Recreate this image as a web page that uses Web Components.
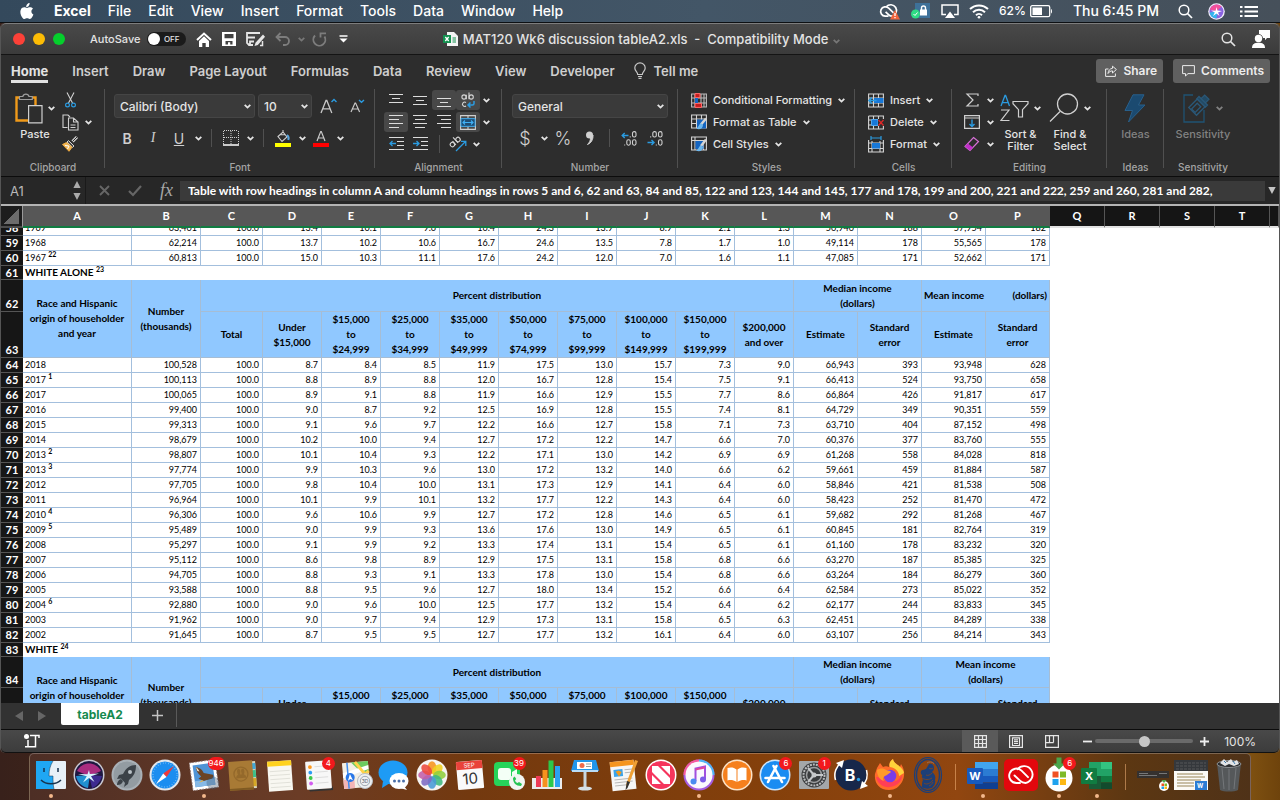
<!DOCTYPE html>
<html lang="en">
<head>
<meta charset="utf-8">
<meta name="viewport" content="width=device-width, initial-scale=1">
<title>MAT120 Wk6 discussion tableA2.xls</title>
<style>
  :root {
    --ui: Inter, "Liberation Sans", sans-serif;
    --sheet: Lato, "Open Sans", sans-serif;
    --panel: #2d2d2d;
    --fg: #e4e4e4;
    --fg-soft: #a5a5a5;
  }
  html, body { margin: 0; height: 100%; }
  body {
    font-family: var(--ui);
    color: var(--fg);
    background: linear-gradient(90deg, #38211b, #5c3014 30%, #7a3c0c 70%, #8a5a14 96%, #6e430c);
    overflow: hidden;
  }
</style>
</head>
<body>
<desktop-shell></desktop-shell>

<script>
// [width, height, markup]
const ICONS = {
  chevron: [7, 5, `<path d="M.7.800l2.800 2.800L6.300.800" fill="none" stroke="currentColor" stroke-width="1.800"/>`],
  apple: [14, 17, `<path d="M9.6 0c.1 1.200-.4 2.200-1 2.900-.6.700-1.500 1.200-2.400 1.100-.1-1.100.4-2.100 1-2.800C7.800.5 8.800 0 9.600 0zM13 5.800c-1 .6-1.600 1.500-1.600 2.700 0 1.400.8 2.400 2 2.900-.3.900-.7 1.700-1.200 2.500-.7 1-1.400 2-2.500 2s-1.400-.6-2.600-.6c-1.200 0-1.600.6-2.600.7-1.100 0-1.900-1.100-2.600-2.100C.5 11.900-.3 8.400 1 6.200c.7-1.200 1.900-1.900 3.100-1.900 1.200 0 2 .7 3 .7s1.600-.8 3-.7c.9 0 2.100.4 2.900 1.500z" fill="#fff"/>`],
  cloud: [22, 17, `<g fill="none" stroke="#fff" stroke-width="1.700"><path d="M9.500 13.200H6.200a4.700 4.700 0 1 1 3.500-8l4.800 4.600"/><path d="M7.300 3.800A5.800 5.800 0 1 1 13 13.200c-1.400 0-2.400-.5-3.200-1.300L6.600 8.800"/></g><path d="M16 7l5 9.500H11z" fill="#f0643c"/><path d="M16 10v3M16 14v1.300" stroke="#fff" stroke-width="1.300"/>`],
  lock: [20, 16, `<rect x="4" width="15" height="15" fill="#3e7199"/><rect x="9" y="6.500" width="7" height="6" fill="#fff"/><path d="M10.500 7V5a2 2 0 0 1 4 0v2" fill="none" stroke="#fff" stroke-width="1.400"/><circle cx="4.500" cy="11" r="4.500" fill="#2fdc85"/><path d="M2.500 11l1.500 1.500 2.500-3" fill="none" stroke="#fff"/>`],
  airplay: [18, 15, `<path d="M5 10.500H1V1h16v9.500h-4" fill="none" stroke="#fff" stroke-width="1.500"/><path d="M9 7.500l5 6.500H4z" fill="#fff"/>`],
  wifi: [20, 15, `<g fill="none" stroke="#fff" stroke-width="2"><path d="M1 5a13 13 0 0 1 18 0"/><path d="M4 8.200a8.500 8.500 0 0 1 12 0"/><path d="M7 11.200a4.300 4.300 0 0 1 6 0"/></g><circle cx="10" cy="13.300" r="1.300" fill="#fff"/>`],
  battery: [24, 13, `<rect x=".7" y=".7" width="19" height="11" rx="1.500" fill="none" stroke="#fff" stroke-width="1.300"/><rect x="2.500" y="2.500" width="9.500" height="7.500" fill="#fff"/><path d="M21 4v4.500c1.300-.5 1.300-4 0-4.500z" fill="#fff"/>`],
  search: [15, 15, `<circle cx="6" cy="6" r="4.800" fill="none" stroke="currentColor" stroke-width="1.500"/><path d="M9.500 9.500L14 14" stroke="currentColor" stroke-width="1.700"/>`],
  siriMini: [17, 17, `<circle cx="8.500" cy="8.500" r="8.300" fill="#f2eefa"/><circle cx="8.500" cy="8.500" r="7" fill="#8a63e0"/><path d="M1.800 6.500a7 7 0 0 1 11.700-3l-5 5z" fill="#f24f9c"/><path d="M1.600 9.500a7 7 0 0 0 6.900 6l1-7z" fill="#34b5ee"/><path d="M8.500 4l.9 3.500 4.600.5-4 1.500 1.500 3.500-3-2.500-3.500 2.500 1.800-3.500L3 7.500l4.600.2z" fill="#fff"/>`],
  list: [18, 13, `<path d="M0 2h2.500M0 6.500h2.500M0 11h2.500" stroke="#fff" stroke-width="2"/><path d="M4.500 2H18M4.500 6.500H18M4.500 11H18" stroke="#fff" stroke-width="2"/>`],
  home: [16, 15, `<path d="M1 8l7-6.500L15 8" fill="none" stroke="#fff" stroke-width="2"/><path d="M3 9l5-4.700L13 9v6H9.700v-4H6.300v4H3z" fill="#fff"/>`],
  save: [14, 14, `<path d="M0 0h14v14H0z" fill="#fff"/><path d="M2.500 2h9v4.300h-9zM3.500 9h7v3.500H8.200v-2.300H6v2.300H3.500z" fill="#414141"/>`],
  saveEdit: [19, 15, `<path d="M14 1H1v10l2 2h4M1 5.500h8M4 13v-3.500h4" fill="none" stroke="#e6e6e6" stroke-width="1.800"/><path d="M17 2.500l-7.500 8.300-1 3.200 3.300-1L19 4.800z" fill="#e6e6e6"/><path d="M14 13.500h2.500V9" fill="none" stroke="#e6e6e6" stroke-width="1.500"/>`],
  undo: [16, 14, `<path d="M5.500 1L1.500 5l4 4M1.500 5H10a4 4 0 0 1 0 8H8" fill="none" stroke="#7d7d7d" stroke-width="1.800"/>`],
  redo: [15, 15, `<path d="M3 3.500A6 6 0 1 0 12.500 4.500" fill="none" stroke="#7d7d7d" stroke-width="1.900"/><path d="M8.500 5.500V1.300h5.500" fill="none" stroke="#7d7d7d" stroke-width="1.800"/>`],
  customize: [9, 8, `<path d="M.5 1h8" stroke="#fff" stroke-width="1.500"/><path d="M.5 3.500h8L4.500 7.500z" fill="#fff"/>`],
  xls: [15, 14, `<path d="M4 0h7l4 4v10H4z" fill="#f4f4f4"/><rect y="3" width="8" height="8" fill="#149150"/><path d="M2.300 5l3.400 4M5.700 5L2.300 9" stroke="#fff" stroke-width="1.300"/><path d="M9.500 6H13M9.500 8H13M9.500 10H13" stroke="#149150" stroke-width="1.200"/>`],
  user: [18, 18, `<circle cx="6.500" cy="8.500" r="3.700" fill="#fff"/><path d="M0 18c0-4 2.500-5.300 6.500-5.300S13 14 13 18z" fill="#fff"/><path d="M7 0h11v8h-3l-2 2.300V8h-2A5 5 0 0 0 7 4z" fill="#fff"/>`],
  bulb: [12, 17, `<path d="M3.700 12.500c0-2.500-2.900-3.200-2.900-6.500a5.200 5.200 0 0 1 10.400 0c0 3.300-2.900 4-2.900 6.500zM4 14.500h4M4.500 16.300h3" fill="none" stroke="#c8c8c8" stroke-width="1.200"/>`],
  share: [12, 12, `<path d="M3.500 4H.6v7.400h9.800V8.500" fill="none" stroke="#ececec"/><path d="M7.500 1.200L11.400 4.500 7.500 8V5.900C5.500 5.900 4.200 6.700 3 8.500c.3-3 1.800-4.800 4.500-5.200z" fill="none" stroke="#ececec"/>`],
  comment: [13, 12, `<path d="M.6.600h11.800v8H6L3.500 11V8.600H.6z" fill="none" stroke="#ececec"/>`],
  paste: [28, 31, `<path d="M6 4.500H1.500v23H14M15 4.500h5.500V12" fill="none" stroke="#f09a1a" stroke-width="2.400"/><path d="M4.500 6.500v-3h3.300a3.200 3.200 0 0 1 6.200 0h3.300v3z" fill="#2d2d2d" stroke="#9d9d9d" stroke-width="1.200"/><path d="M13.600 12.600H27v17.300H13.600z" fill="#2d2d2d" stroke="#cfcfcf" stroke-width="1.200"/>`],
  cut: [11, 16, `<path d="M2 .5l5.500 10.500M9 .5L3.500 11" stroke="#cfcfcf" stroke-width="1.100"/><circle cx="2.500" cy="13" r="1.900" fill="none" stroke="#2b9be0" stroke-width="1.200"/><circle cx="8.500" cy="13" r="1.900" fill="none" stroke="#2b9be0" stroke-width="1.200"/>`],
  copy: [17, 17, `<path d="M5.500 13.500H1V1h5l2 2" fill="none" stroke="#cfcfcf" stroke-width="1.100"/><path d="M6.500 4h5L16 8v8H6.500zM11.500 4v4H16M8.500 11h5M8.500 13.500h5" fill="none" stroke="#cfcfcf" stroke-width="1.100"/>`],
  brush: [16, 16, `<path d="M15 1l-4.500 4.500" stroke="#cfcfcf" stroke-width="3"/><path d="M15 1l-4.500 4.500" stroke="#2d2d2d"/><path d="M6.500 4.500l5.500 5.500-1.500 1.500L5 6z" fill="#4a4a4a" stroke="#cfcfcf"/><path d="M4.500 6.500L.5 8.500 7 15.300l3-4z" fill="#f0b95c" stroke="#f0a93c"/><path d="M3 9.500l4 .5M5.500 13l1.500-3" stroke="#fff"/>`],
  grow: [17, 16, `<path d="M1 15L6 2.500h.8L11.800 15M2.700 10.800h7.400" fill="none" stroke="#c8c8c8" stroke-width="1.300"/><path d="M11.500 4L14 1.500 16.500 4" fill="none" stroke="#2b9be0" stroke-width="1.400"/>`],
  shrink: [15, 14, `<path d="M1 13L5 4h.6l4 9M2.500 10h5.600" fill="none" stroke="#c8c8c8" stroke-width="1.200"/><path d="M9 1l2.500 2.300L14 1" fill="none" stroke="#2b9be0" stroke-width="1.400"/>`],
  borders: [16, 16, `<path d="M1 .5h14M.5 1v13M15.500 1v13M8 1v13M1 7.500h14" stroke="#cfcfcf" stroke-dasharray="1 1" fill="none"/><path d="M0 15h16" stroke="#fff" stroke-width="1.500"/>`],
  fill: [16, 17, `<path d="M3 6.500L8 2l4 5-5 4.500zM8 2V0M5 4.800l5 0" fill="none" stroke="#cfcfcf" stroke-width="1.100"/><path d="M12 5c2 1.500 2 3 1.300 5" fill="none" stroke="#5aa5dc" stroke-width="2"/><path d="M0 13h16v4H0z" fill="#ff0"/>`],
  fontColor: [16, 17, `<path d="M4 11L7.700 1.500h.6L12 11M5.200 8h5.600" fill="none" stroke="#c8c8c8" stroke-width="1.200"/><path d="M0 13h16v4H0z" fill="red"/>`],
  alignTop: [14, 14, `<path d="M0 1.500h14M3 5.500h8M0 9.500h14" stroke="#dcdcdc" stroke-width="1.200"/>`],
  alignMid: [14, 14, `<path d="M0 3.500h14M3 7.500h8M0 11.500h14" stroke="#dcdcdc" stroke-width="1.200"/>`],
  alignBot: [14, 14, `<path d="M0 5.500h14M3 9.500h8M0 13.500h14" stroke="#dcdcdc" stroke-width="1.200"/>`],
  left: [14, 14, `<path d="M0 .5h14M0 4.500h10M0 8.500h14M0 12.500h10" stroke="#dcdcdc" stroke-width="1.200"/>`],
  center: [14, 14, `<path d="M0 .5h14M2 4.500h10M0 8.500h14M2 12.500h10" stroke="#dcdcdc" stroke-width="1.200"/>`],
  right: [14, 14, `<path d="M0 .5h14M4 4.500h10M0 8.500h14M4 12.500h10" stroke="#dcdcdc" stroke-width="1.200"/>`],
  outdent: [15, 14, `<path d="M0 .5h15M8 4.500h7M8 8.500h7M0 12.500h15" stroke="#dcdcdc" stroke-width="1.200"/><path d="M7 6.500H1.200M3.500 4L1 6.500 3.500 9" fill="none" stroke="#2b9be0" stroke-width="1.300"/>`],
  indent: [15, 14, `<path d="M0 .5h15M8 4.500h7M8 8.500h7M0 12.500h15" stroke="#dcdcdc" stroke-width="1.200"/><path d="M0 6.500h5.800M3.500 4L6 6.500 3.500 9" fill="none" stroke="#2b9be0" stroke-width="1.300"/>`],
  wrap: [14, 16, `<g fill="none" stroke="#d5d5d5" stroke-width="1.100"><circle cx="3" cy="5" r="2.100"/><path d="M5.300 2.700v4.500M8 .5v6.700"/><circle cx="10.200" cy="5" r="2.100"/><path d="M5 10.500a2.200 2.200 0 1 0 0 3.500"/></g><path d="M13 9v2.500c0 1-.6 1.500-1.500 1.500H7M9.500 10.500L7 13l2.500 2.500" fill="none" stroke="#2b9be0" stroke-width="1.500"/>`],
  merge: [16, 15, `<path d="M.6.600h14.800v13.800H.6zM.6 3.500h14.800M.6 11.500h14.800M8 .6v2.900M8 11.500v2.900" fill="none" stroke="#cfcfcf" stroke-width="1.100"/><path d="M1 3.700h14v7.600H1z" fill="#1f4d73" stroke="#2b9be0"/><path d="M3 7.500h10M5 5.500l-2 2 2 2M11 5.500l2 2-2 2" fill="none" stroke="#3fb0f5" stroke-width="1.200"/>`],
  orient: [17, 16, `<g transform="rotate(-42 6 8)" fill="none" stroke="#d5d5d5" stroke-width="1.100"><circle cx="3" cy="6" r="2.200"/><path d="M5.400 3.500v5M8.300 1v7.500"/><circle cx="10.500" cy="6" r="2.200"/></g><path d="M6 15L15.500 5.500M11 5.300h4.800V10" fill="none" stroke="#2b9be0" stroke-width="1.300"/>`],
  decUp: [16, 15, `<path d="M7.500 4.500H1.200M3.700 2L1.200 4.500 3.700 7" fill="none" stroke="#2b9be0" stroke-width="1.400"/><g fill="none" stroke="#cfcfcf" stroke-width="1.100"><rect x="11.500" y=".6" width="3.500" height="5.400" rx="1.600"/><rect x="5.800" y="8.800" width="3.500" height="5.400" rx="1.600"/><rect x="11.500" y="8.800" width="3.500" height="5.400" rx="1.600"/></g><path d="M8.700 5.800h1M3.200 14h1" stroke="#cfcfcf" stroke-width="1.200"/>`],
  decDown: [16, 15, `<path d="M.5 11.500H7M4.500 9L7 11.500 4.500 14" fill="none" stroke="#2b9be0" stroke-width="1.400"/><g fill="none" stroke="#cfcfcf" stroke-width="1.100"><rect x="5.800" y=".6" width="3.500" height="5.400" rx="1.600"/><rect x="11.500" y=".6" width="3.500" height="5.400" rx="1.600"/><rect x="11.500" y="8.800" width="3.500" height="5.400" rx="1.600"/></g><path d="M3.200 5.800h1M8.800 14h1" stroke="#cfcfcf" stroke-width="1.200"/>`],
  comma: [9, 15, `<circle cx="4.500" cy="4" r="3.500" fill="#d0d0d0"/><path d="M8 4c.2 4.500-1.500 7.800-5.500 9.500 2-2 3-4 3-6.500z" fill="#d0d0d0" stroke="#d0d0d0"/>`],
  condFormat: [16, 15, `<path d="M.6 1h14.800v13H.6zM.6 5h14.800M.6 10h14.800M4 1v13M10 1v13M13 1v13" fill="none" stroke="#bdbdbd" stroke-width="1.100"/><path d="M4 .6h5v4H4zM4 10.400h6.500v4H4z" fill="#c41d1d" stroke="#ff6a6a"/><path d="M4 5h3v5H4z" fill="#1464c0"/>`],
  tableFormat: [16, 16, `<path d="M.6 1h14.800v13H.6zM.6 5h14.800M.6 9.500h14.800M5.500 1v13M10.500 1v13" fill="none" stroke="#d5d5d5" stroke-width="1.100"/><path d="M6 5.500h9v9H6z" fill="#1464c0"/><path d="M15 4.500l-5 6" stroke="#d5d5d5" stroke-width="2.500"/><path d="M10.500 9.500c-3 0-2.500 4-5.500 5 3 1.500 7 .5 7-3.500z" fill="#6db8ee"/>`],
  cellStyle: [16, 16, `<path d="M.6 1h14.800v13H.6zM.6 4.500h14.800M4 1v13M12.500 4v10" fill="none" stroke="#d5d5d5" stroke-width="1.100"/><path d="M4.500 5h8v8h-8z" fill="#1464c0"/><path d="M15 3.500l-5 6.500" stroke="#d5d5d5" stroke-width="2.500"/><path d="M10.500 9.500c-3 0-2.500 4-5.500 5 3 1.500 7 .5 7-3.500z" fill="#6db8ee"/>`],
  insertCells: [16, 15, `<path d="M.6 1h14.800v13H.6zM.6 5h14.800M.6 10h14.800M5.500 1v13M10.500 1v13" fill="none" stroke="#d5d5d5" stroke-width="1.100"/><path d="M6 5h9.500v5H6z" fill="#1878d8"/><path d="M8.500 7.500H1M4 4.500l-3 3 3 3" fill="none" stroke="#2b9be0" stroke-width="1.500"/>`],
  deleteCells: [16, 15, `<path d="M.6 1h14.800v13H.6V1M.6 5H4M.6 10H4M5.500 1v3M10.500 1v3M5.500 11v3M10.500 11v3" fill="none" stroke="#d5d5d5" stroke-width="1.100"/><path d="M3.500 4.500h6.500v6H3.500z" fill="#1878d8" stroke="#4fa7ee"/><path d="M10 4h6v7h-6z" fill="#2d2d2d"/><path d="M10.500 5l5 5.500M15.500 5l-5 5.500" stroke="#e02828" stroke-width="1.300"/>`],
  formatCells: [16, 17, `<path d="M.6 4v12h14.800V4M.6 7h14.800M.6 12.500h14.800M4 5v11M12 5v11" fill="none" stroke="#d5d5d5" stroke-width="1.100"/><path d="M4 7h8v5.500H4z" fill="#1878d8"/><path d="M3 2h10M3 0v4M13 0v4" stroke="#2b9be0" stroke-width="1.200"/>`],
  sum: [13, 14, `<path d="M12 3V1H1l6 6-6 6h11v-2" fill="none" stroke="#d0d0d0" stroke-width="1.200"/>`],
  fillDown: [16, 14, `<path d="M.6.600h14.800v12.800H.6zM.6 3h14.800" fill="none" stroke="#d0d0d0" stroke-width="1.200"/><path d="M8 4.500v7M5.500 9L8 11.500 10.500 9" fill="none" stroke="#2b9be0" stroke-width="1.400"/>`],
  eraser: [16, 16, `<path d="M9.500 1.500l5 4-8.500 9-5-4z" fill="none" stroke="#d46fd4" stroke-width="1.200"/><path d="M4 7.500l5 4-3 3-5-4z" fill="#c02ec8"/>`],
  sort: [29, 29, `<path d="M1 12L5 1.500h.6L9.500 12M2.300 8.700h6" fill="none" stroke="#2b9be0" stroke-width="1.300"/><path d="M1 16h8L1 26.500h8.500" fill="none" stroke="#d0d0d0" stroke-width="1.200"/><path d="M13 7.500h15v2.200l-5.500 6V23h-4v-7.300l-5.500-6z" fill="none" stroke="#d0d0d0" stroke-width="1.200"/>`],
  find: [30, 30, `<circle cx="18.500" cy="11" r="10" fill="none" stroke="#d0d0d0" stroke-width="1.300"/><path d="M11 18.500L1 28.500" stroke="#d0d0d0" stroke-width="1.300"/>`],
  bolt: [22, 29, `<path d="M9 .8h11L14.500 11H21L4.500 28l4-11.500H1z" fill="#1b4a70" stroke="#28608c"/>`],
  sensitivity: [28, 31, `<path d="M10 2H1v27h20V17" fill="none" stroke="#1f5373" stroke-width="1.300"/><g transform="rotate(45 16 12)" fill="none" stroke="#2a5878" stroke-width="1.300"><rect x="10.500" y="9" width="11" height="12"/><rect x="13.500" y="12" width="5" height="8"/><path d="M10 6h12v3H10zM13 6V1h6v5z" fill="#234a64"/></g>`],
  clear: [11, 11, `<path d="M1 1l9 9M10 1l-9 9" stroke="#666" stroke-width="1.900"/>`],
  check: [14, 11, `<path d="M1 6l4 4L13 1" fill="none" stroke="#666" stroke-width="2.200"/>`],
  stepper: [8, 19, `<path d="M4 0l3.600 7H.4zM4 19l3.600-7H.4z" fill="#ababab"/>`],
  down: [8, 7, `<path d="M.3 0h7.400L4 7z" fill="#c4c4c4"/>`],
  prev: [8, 10, `<path d="M8 0v10L0 5z" fill="#666"/>`],
  next: [8, 10, `<path d="M0 0v10l8-5z" fill="#666"/>`],
  plus: [11, 11, `<path d="M5.500 0v11M0 5.500h11" stroke="#c4c4c4" stroke-width="1.500"/>`],
  plusBold: [9, 9, `<path d="M4.500 0v9M0 4.500h9" stroke="#eee" stroke-width="1.800"/>`],
  minusBold: [9, 9, `<path d="M0 4.500h9" stroke="#eee" stroke-width="1.800"/>`],
  macro: [16, 14, `<circle cx="2.500" cy="2.500" r="2.500" fill="#fff"/><path d="M6 1.500h9.500M4 6v6.500M1 12.700h10.500V2M12 1.500h3V4" fill="none" stroke="#fff" stroke-width="1.500"/>`],
  viewNormal: [13, 13, `<path d="M.6.600h11.800v11.800H.6zM.6 4.500h11.800M.6 8.500h11.800M4.500.6v11.800M8.500.6v11.800" fill="none" stroke="#e6e6e6" stroke-width="1.200"/>`],
  viewPage: [14, 13, `<path d="M.6.600h12.800v11.800H.6zM3.500 2.800h7v7.700h-7zM5 4.800h4M5 6.600h4M5 8.500h4" fill="none" stroke="#e6e6e6" stroke-width="1.200"/>`],
  viewBreak: [14, 13, `<path d="M.6.600h12.800v11.800H.6zM4.500.6v7M8.500.6v7M.6 7.700h8" fill="none" stroke="#e6e6e6" stroke-width="1.200"/>`]
};

// all dock art is drawn on a 32x32 board
const DOCK_ART = {
  finder: `<rect x="1" y="2" width="30" height="28" rx="1" fill="#e8f1f8"/><path d="M1 2h17c-3 5-4 9-4 15h4c0 5 0 9 1 13H1z" fill="#1fa7f3"/><path d="M9 9v4M23 9v4M6 21c5 5 15 5 20 0" fill="none" stroke="#17324c" stroke-width="1.500"/><path d="M18 2c-3 5-4 9-4 15h4c0 5 0 9 1 13" fill="none" stroke="#17324c" stroke-width=".5"/>`,
  siri: `<circle cx="16" cy="16" r="15.500" fill="#c9c9d2"/><circle cx="16" cy="16" r="14" fill="#1e1740"/><path d="M4 12c5-10 19-10 24 0L16 17z" fill="#a92c80"/><path d="M3 17c1 6 6 11 12 12l2-13z" fill="#1f8fd0"/><path d="M29 17c-2 6-5 10-10 12l-3-13z" fill="#3d2a90"/><path d="M16 11l.8 4 9.200-.5-8 2.800 3.500 5.700-5.500-4-6 4.500 3.800-6.200L5 15l9.500.3z" fill="#d9f6ff"/>`,
  rocket: `<circle cx="16" cy="16" r="15.500" fill="#a9b1b7"/><circle cx="16" cy="16" r="13.500" fill="#939ca2"/><path d="M25 6c-6 0-10 3-13 9l-4 1-2 4 4-.5L14 24l-1 4 4-3 1-4c5-4 7-8 7-15z" fill="#3b4248"/><circle cx="19" cy="13" r="2" fill="#b9c1c6"/><path d="M10 20c-3 1-4 4-4 6 3 0 5-1 6-4z" fill="#3b4248"/>`,
  safari: `<circle cx="16" cy="16" r="15.500" fill="#e4e8ec"/><circle cx="16" cy="16" r="13.500" fill="#1c8ef0"/><circle cx="16" cy="16" r="12" fill="none" stroke="#8cc9f8" stroke-dasharray=".6 2.100" stroke-width="1.500"/><path d="M25 7l-7.500 11-3.300-3.500z" fill="#f0393a"/><path d="M7 25l7.200-10.500 3.300 3.500z" fill="#fff"/>`,
  mail: `<g transform="rotate(-8 16 16)"><rect x="3" y="2" width="26" height="28" fill="#fff"/><rect x="3" y="2" width="26" height="28" fill="none" stroke="#8a6f68" stroke-dasharray="1.500 1.500"/><rect x="6" y="5" width="20" height="22" fill="#4f94d6"/><path d="M6 21h20v6H6z" fill="#86b9e6"/><path d="M9 7c3 1 6 3 7 7l9 3c1 2-1 4-4 4l-6 1-5-3 3-2c-3-3-4-6-4-10z" fill="#6b4425"/><path d="M9 7c1 1 2 2 3 5l-2-1z" fill="#f2e6d0"/><path d="M13 21l-3 2 5-1z" fill="#e8b23c"/></g><circle cx="25" cy="24" r="6.500" fill="#3a4f66" fill-opacity=".35"/>`,
  contacts: `<g transform="rotate(-4 16 16)"><rect x="6" y="3" width="24" height="27" fill="#d9d3ba"/><path d="M26 5h4v6h-4z" fill="#40a8d8"/><path d="M26 12h4v7h-4z" fill="#3dc08a"/><path d="M26 20h4v8h-4z" fill="#d6a726"/><path d="M3 2h24v29H3z" fill="#a87a35"/><path d="M3 29h24v2H3z" fill="#7f5a22"/><circle cx="15" cy="15" r="7" fill="none" stroke="#94692b" stroke-width="1.300"/><path d="M12 10c2-1 3 1 2.500 3-.3 1.500-.5 2 .5 3v3h-5c0-2 1-3 2-3.500-.8-2-1-4.500 0-5.500zM18 10c-2-1-3 1-2.500 3 .3 1.500.5 2-.5 3v3h5c0-2-1-3-2-3.500.8-2 1-4.500 0-5.500z" fill="#94692b"/></g>`,
  notes: `<g transform="rotate(-4 16 16)"><rect x="4" y="2" width="24" height="30" fill="#f8f7f1"/><path d="M4 2h24v5H4z" fill="#ffd21e"/><path d="M6 12h20M6 16h20M6 20h20M6 24h20M6 28h20" stroke="#d8d8d0" stroke-width=".7"/></g>`,
  reminders: `<g transform="rotate(-4 16 16)"><path d="M6 30h23l1-3v5H7z" fill="#333"/><rect x="4" y="2" width="25" height="28" rx="1" fill="#f7f7f7"/><circle cx="8.500" cy="7.500" r="1.900" fill="#ff9a1e"/><circle cx="8.500" cy="13" r="1.900" fill="#2c9cf4"/><circle cx="8.500" cy="18.500" r="1.900" fill="#3cc84a"/><circle cx="8.500" cy="24" r="1.900" fill="#d35cf0"/><path d="M13 7.500h13M13 13h13M13 18.500h13M13 24h13" stroke="#ddd"/></g>`,
  maps: `<g transform="rotate(-5 16 16)"><rect x="3" y="3" width="26" height="26" fill="#f3efe4"/><path d="M12 3h17v12L20 12z" fill="#6ccb5f"/><path d="M3 13l26-6v4L3 18z" fill="#fff"/><path d="M16 3l9 13 4-3" stroke="#ffd24a" stroke-width="3" fill="none"/><path d="M3 20h11v9H3z" fill="#f4b5b5"/><path d="M8 3v26" stroke="#3f8cf0" stroke-width="1.500"/><circle cx="10" cy="18" r="4.500" fill="#2a78e8"/><path d="M10 14.500l2.500 6.500-2.500-1.500L7.500 21z" fill="#fff"/></g><circle cx="25" cy="22" r="7.500" fill="#eef0f2" stroke="#b7bcc2"/><circle cx="25" cy="22" r="4.700" fill="none" stroke="#7c8894" stroke-width=".7"/><text x="25" y="24" font-size="5" text-anchor="middle" fill="#55606e">3D</text>`,
  messages: `<ellipse cx="15" cy="13.500" rx="14.500" ry="12" fill="#1e9bf5"/><path d="M5 22l-1 7 8-5z" fill="#1e9bf5"/><ellipse cx="21" cy="22" rx="9.500" ry="8" fill="#fff"/><path d="M26 27l3 4-7-2z" fill="#fff"/><g fill="#4b6fa8"><circle cx="16.500" cy="22" r="1.500"/><circle cx="21" cy="22" r="1.500"/><circle cx="25.500" cy="22" r="1.500"/></g>`,
  photos: `<circle cx="16" cy="16" r="15.500" fill="#f6f4f2"/><g fill-opacity=".88">${["#f7941d", "#f0d01e", "#8fcf3c", "#3fb87e", "#4a9ad6", "#7e6bc4", "#c35fa8", "#ee4a3c"].map((c, i) => `<ellipse cx="16" cy="8.500" rx="4.300" ry="6.300" fill="${c}" transform="rotate(${i * 45} 16 16)"/>`).join("")}</g>`,
  calendar: `<g transform="rotate(-5 16 16)"><rect x="3" y="2" width="26" height="28" rx="1" fill="#fafafa"/><path d="M3 2h26v8H3z" fill="#e9423a"/><text x="16" y="8.300" font-size="6" text-anchor="middle" fill="#fff">SEP</text><text x="16" y="25" font-size="15" text-anchor="middle" fill="#333">10</text></g>`,
  facetime: `<rect x="1" y="3" width="26" height="24" rx="4" fill="#26d45a"/><rect x="5" y="9" width="13" height="12" rx="3" fill="#f4fff6"/><path d="M19 13l5-3v10l-5-3z" fill="#f4fff6"/><circle cx="24" cy="23" r="8" fill="#f2f6f3"/><path d="M20 19c0 5 3 8 8 8l1-2-3-2-1.500 1c-1.500-.5-2-1.500-2.500-2.500l1.200-1.500-1.500-2.500z" fill="#28c456"/>`,
  numbers: `<path d="M1 30V19h30v11z" fill="#ececec"/><path d="M5 17h5v11H5z" fill="#ee3b56"/><path d="M11.500 11h5v17h-5z" fill="#f6921e"/><path d="M17.500 1.500h5V28h-5z" fill="#2cc84a"/><path d="M24 7h5v21h-5z" fill="#2aa2f2"/>`,
  keynote: `<path d="M5 1h22l3 11H2z" fill="#2196ec"/><path d="M3 11h26v2H3z" fill="#b9dcf6"/><rect x="8" y="3" width="15" height="7" fill="#fff"/><circle cx="13" cy="6.500" r="2.500" fill="#f26a4a"/><path d="M17 5h5M17 7.500h5" stroke="#999"/><path d="M14.500 13h3v15h-3z" fill="#c9d5dd"/><ellipse cx="16" cy="29.500" rx="7" ry="2" fill="#d5dfe6"/>`,
  pages: `<g transform="rotate(-6 16 16)"><rect x="4" y="2" width="24" height="29" fill="#f6f6f6"/><path d="M4 2h24v5H4z" fill="#f5951f"/><rect x="7" y="10" width="9" height="7" fill="#3aa3ea"/><path d="M9 12l3-1 3 2-3 4z" fill="#f39a1e"/><path d="M18 11h8M18 14h8M7 20h18M7 23h18M7 26h12" stroke="#b7b7b7"/></g><path d="M28 1l3 1-9 23-3 5 .5-6z" fill="#f0a034"/><path d="M20 22l3 1-2.500 6-2 2z" fill="#333"/>`,
  news: `<circle cx="16" cy="16" r="15.500" fill="#fff"/><circle cx="16" cy="16" r="14" fill="#f5355c"/><path d="M7 7h6l12 12v6h-6L7 13zM7 16l9 9H7zM16 7h9v9z" fill="#fff"/>`,
  music: `<circle cx="16" cy="16" r="15.500" fill="#a65de0"/><path d="M16 .5a15.500 15.500 0 0 1 15.500 15.500L16 16z" fill="#4fb4f5"/><path d="M.5 16A15.500 15.500 0 0 1 16 .5V16z" fill="#f55aa0"/><circle cx="16" cy="16" r="13.500" fill="#fbf8fd"/><path d="M12.500 22V9.500L22 7.500V20" fill="none" stroke="#a04fe0" stroke-width="2"/><path d="M12.500 11.500l9.500-2V7.500l-9.500 2z" fill="#e0459c"/><circle cx="10.500" cy="22.500" r="3" fill="#4a8cf0"/><circle cx="20" cy="20.500" r="3" fill="#7d5ae8"/>`,
  books: `<circle cx="16" cy="16" r="15.500" fill="#fbe3c8"/><circle cx="16" cy="16" r="14" fill="#f5801e"/><path d="M15.500 10.500C13 8 9 8 6.500 9v12.500c3-1 6-.5 9 1.500zM16.500 10.500C19 8 23 8 25.500 9v12.500c-3-1-6-.5-9 1.500z" fill="#fff"/>`,
  appstore: `<circle cx="16" cy="16" r="15.500" fill="#cfe6fb"/><circle cx="16" cy="16" r="14" fill="#1a8cf2"/><path d="M17.500 7L9 23M14.500 7L23 23M6.500 19h19" stroke="#fff" stroke-width="2.600" stroke-linecap="round"/>`,
  settings: `<rect x="1" y="2" width="30" height="28" rx="1" fill="#a4a7a9"/><circle cx="16" cy="16" r="12.500" fill="#3a3c3e"/><circle cx="16" cy="16" r="10.500" fill="none" stroke="#b8babc" stroke-width="2" stroke-dasharray="2 1"/><circle cx="16" cy="16" r="7.500" fill="none" stroke="#9b9d9f" stroke-width="1.500"/><path d="M16 16L10 9M16 16h9M16 16l-6 7" stroke="#c6c8ca" stroke-width="2"/><circle cx="16" cy="16" r="2.500" fill="#c6c8ca"/>`,
  brain: `<circle cx="15" cy="16" r="15.500" fill="#17274a"/><path d="M-.5 21A16 16 0 0 1 6 3" fill="none" stroke="#fff" stroke-width="1.500"/><path d="M0 4l8-3-2 8z" fill="#fff"/><path d="M30.500 11A16 16 0 0 1 26 27" fill="none" stroke="#fff" stroke-width="1.500"/><path d="M32 27l-8 3 2-8z" fill="#fff"/><text x="14" y="22" font-size="16" font-weight="700" text-anchor="middle" fill="#fff">B</text><circle cx="22.500" cy="20.500" r="1.700" fill="#28a0e8"/>`,
  firefox: `<path d="M3 9l3-5 3 4c2-1 4-1 6 0 0-3 1-6 4-8 0 4 5 5 7 8l1-3c4 6 4 12 1 18-3 5-7 8-13 8C5 31 0 24 1 15z" fill="#ff6a2a"/><path d="M19 0c-4 3-4 6-3 8 6 1 9 5 9 9l5-3c-1-7-10-8-11-14z" fill="#ffd23a"/><path d="M2 18c2 9 11 12 18 9 5-2 8-6 8-11-3 5-7 7-11 7-7 0-9-5-15-5z" fill="#ff3f55"/><circle cx="16" cy="17" r="6.300" fill="#7a3ce8"/><path d="M3 11c3-2 7-2 9 0 2 1 4 0 5 2-1 1-3 2-4 3-3 1-5 3-3 6-4-1-7-5-7-11z" fill="#ff9a2a"/>`,
  seal: `<g fill="none" stroke="#1d3f78"><ellipse cx="16" cy="16" rx="13.500" ry="17.500" stroke-width="1.200"/><ellipse cx="16" cy="16" rx="11.500" ry="15.500" stroke-width="1.400"/></g><g fill="#1d3f78"><path d="M17 5c3-1 5 1 5 4 0 2-1 3-2 4 3 2 4 5 3 8 1 3-1 6-3 8-4 1-8 1-10-1 0-3 0-5 1-7-2-3-1-5 1-7-1-2 0-4 2-4 1-2 2-3 3-5z"/><circle cx="11.500" cy="13.500" r="2.700"/></g><path d="M15 4c2-1.500 5-1.500 7 .5" fill="none" stroke="#9c7a6a" stroke-width=".8"/><path d="M17 9c1 1 3 1 4 0M14 16c2 1 4 0 6-2M10 19c3 2 7 2 10 0M12 24c2 2 6 1 9-3M17 27c2-1 3-2 4-4" fill="none" stroke="#86481a" stroke-width=".8"/>`,
  word: `<path d="M8 3h23v7H8z" fill="#41a5ee"/><path d="M8 10h23v7H8z" fill="#2b7cd3"/><path d="M8 17h23v6.500H8z" fill="#185abd"/><path d="M8 23.500h23V30H8z" fill="#103f91"/><rect x="0" y="9" width="16" height="16" rx="1" fill="#185abd"/><text x="8" y="21" font-size="11" font-weight="700" text-anchor="middle" fill="#fff">W</text>`,
  cc: `<rect x="-1" y="0" width="34" height="32" rx="5" fill="#e3070d"/><g fill="none" stroke="#fff" stroke-width="1.900" stroke-linecap="round"><path d="M15 24H11.500a7.200 7.200 0 1 1 5-12.300l6.500 6.500"/><path d="M12.500 10.200A8.500 8.500 0 1 1 20.500 24c-2.300 0-4-.8-5.300-2.100L9.500 16.500"/></g>`,
  updater: `<circle cx="16" cy="19" r="13.500" fill="#fff"/><path d="M9.500 12.500h6v6h-6z" fill="#f05023"/><path d="M17 12.500h6v6h-6z" fill="#7eba28"/><path d="M9.500 20h6v6h-6z" fill="#1fa2ee"/><path d="M17 20h6v6h-6z" fill="#fdb813"/><path d="M13.500-1.500h5v6h3.500L16 10.500 10 4.500h3.500z" fill="#4aa64c"/>`,
  excel: `<path d="M8 3h12v14H8z" fill="#21a366"/><path d="M20 3h11v7H20z" fill="#33c481"/><path d="M20 10h11v7H20z" fill="#21a366"/><path d="M8 17h12v13H8z" fill="#185c37"/><path d="M20 17h11v6.500H20z" fill="#107c41"/><path d="M20 23.500h11V30H20z" fill="#134b2d"/><rect x="0" y="9" width="16" height="16" rx="1" fill="#107c41"/><text x="8" y="21" font-size="11" font-weight="700" text-anchor="middle" fill="#fff">X</text>`,
  miniWindow: `<path d="M0 12h32v7H0z" fill="#35312f"/><path d="M2 14.500h9M22 14.500h8M2 16.500h18" stroke="#777"/><circle cx="27" cy="27" r="5" fill="#fff"/><path d="M24.500 24.500H27V27h-2.500z" fill="#f05023"/><path d="M27.500 24.500H30V27h-2.500z" fill="#7eba28"/><path d="M24.500 27.500H27V30h-2.500z" fill="#1fa2ee"/><path d="M27.500 27.500H30V30h-2.500z" fill="#fdb813"/><path d="M27 24l-2.500-3h5z" fill="#4aa64c"/>`,
  miniDoc: `<rect x="-1" y="1" width="34" height="30" fill="#fbfaf5"/><path d="M-1 1h34v11H-1z" fill="#35383c"/><path d="M1 4h30M1 7h30M1 10h30" stroke="#666" stroke-dasharray="3 1" stroke-width=".7"/><path d="M2 15h26M2 18h28M2 21h24M2 24h17M2 27h17" stroke="#b9ac8a" stroke-width="1.300"/><rect x="20" y="22" width="12" height="9" fill="#2b7cd3"/><text x="25" y="29" font-size="6" font-weight="700" text-anchor="middle" fill="#fff">W</text>`,
  trash: `<path d="M4 4h24l-3 27c-4 2-14 2-18 0z" fill="#55585a"/><path d="M9 9l2 21M23 9l-2 21M16 10v21" stroke="#74777a"/><ellipse cx="16" cy="5" rx="12" ry="3.500" fill="#2c2e30" stroke="#8d9093"/><path d="M7 4l4-4 3 3 4-3 2 3 4-2 2 4-5 2-5-2-4 2z" fill="#e2e4e6"/><path d="M11 2l2 2M20 2l2 3" stroke="#3c78a8"/>`
};

const CONTROLS = `
  button {
    display: inline-flex;
    align-items: center;
    justify-content: center;
    padding: 0;
    border: 0;
    background: none;
    color: inherit;
    font: inherit;
  }
  input, select { font: inherit; color: inherit; margin: 0; }
`;

class BaseElement extends HTMLElement {
  constructor() {
    super();
    this.attachShadow({ mode: "open" });
  }

  connectedCallback() {
    this.shadowRoot.innerHTML = this.render();
  }
}

class UiIcon extends BaseElement {
  render() {
    const [w, h, body] = ICONS[this.getAttribute("name")];
    return `
      <style>
        :host { display: inline-flex; flex: none; }
        svg { display: block; overflow: visible; }
      </style>
      <svg width="${w}" height="${h}" viewBox="0 0 ${w} ${h}" aria-hidden="true">${body}</svg>
    `;
  }
}

const icon = (name) => `<ui-icon name="${name}"></ui-icon>`;
const iconButton = (name, label, cls = "") => `<button class="${cls}" aria-label="${label}">${icon(name)}</button>`;
const chevronButton = (label) => iconButton("chevron", `${label} options`, "chev");

class MenuBar extends BaseElement {
  render() {
    const menus = ["File", "Edit", "View", "Insert", "Format", "Tools", "Data", "Window", "Help"];
    return `
      <style>
        ${CONTROLS}
        :host {
          display: flex;
          justify-content: space-between;
          align-items: center;
          height: 22px;
          padding: 0 22px 0 20px;
          border-bottom: 1px solid #0d1013;
          background: linear-gradient(90deg, #34495c, #435667 55%, #46505a);
          color: #fff;
          font-size: 14px;
          line-height: 22px;
          font-weight: 500;
        }
        nav { display: flex; align-items: center; gap: 17px; }
        nav strong { font-weight: 700; margin-left: 3px; }
        .status { display: flex; align-items: center; gap: 10px; }
        .percent { font-size: 12px; display: flex; align-items: center; gap: 4px; }
        .clock { margin: 0 9px; }
        .status button + button { margin-left: 5px; }
      </style>
      <nav>
        ${iconButton("apple", "Apple menu")}
        <button><strong>Excel</strong></button>
        ${menus.map((m) => `<button>${m}</button>`).join("")}
      </nav>
      <div class="status">
        ${icon("cloud")}${icon("lock")}${icon("airplay")}${icon("wifi")}
        <span class="percent">62% ${icon("battery")}</span>
        <span class="clock">Thu 6:45 PM</span>
        ${iconButton("search", "Spotlight")}
        ${iconButton("siriMini", "Siri")}
        ${iconButton("list", "Notification Center")}
      </div>
    `;
  }
}

class TitleBar extends BaseElement {
  render() {
    return `
      <style>
        ${CONTROLS}
        :host {
          display: grid;
          grid-template-columns: 1fr auto 1fr;
          align-items: center;
          height: 30px;
          padding: 0 9px 0 12px;
          border-top: 1px solid #7d7d7d;
          border-bottom: 1px solid #141414;
          border-radius: 5px 5px 0 0;
          background: linear-gradient(#494949, #3b3b3b);
          font-size: 12px;
          font-weight: 500;
        }
        .tools { display: flex; align-items: center; gap: 10px; }
        .lights { display: flex; gap: 8px; margin-right: 15px; }
        .light { width: 12px; height: 12px; border-radius: 50%; background: #fc4138; }
        .light.min { background: #fdbc05; }
        .light.max { background: #05cf2c; }
        .auto { display: flex; align-items: center; gap: 7px; font-size: 11px; }
        .switch {
          display: flex;
          align-items: center;
          justify-content: space-between;
          width: 39px;
          height: 14px;
          padding: 0 7px 0 1px;
          border-radius: 7px;
          background: #1b1b1b;
          font-size: 8px;
        }
        .switch::before { content: ""; width: 12px; height: 12px; border-radius: 50%; background: #fff; }
        .history { display: flex; align-items: center; gap: 7px; margin-right: 2px; }
        h1 {
          display: flex;
          align-items: center;
          gap: 5px;
          margin: 0;
          font-size: 13px;
          font-weight: 500;
          white-space: pre;
        }
        .dim { color: #777; }
        .side { display: flex; justify-content: flex-end; align-items: center; gap: 16px; }
      </style>
      <div class="tools">
        <div class="lights">
          <button class="light" aria-label="Close"></button>
          <button class="light min" aria-label="Minimize"></button>
          <button class="light max" aria-label="Zoom"></button>
        </div>
        <span class="auto"><span id="auto">AutoSave</span>
          <button class="switch" role="switch" aria-checked="false" aria-labelledby="auto">OFF</button>
        </span>
        ${iconButton("home", "Home")}
        ${iconButton("save", "Save")}
        ${iconButton("saveEdit", "Save as")}
        <div class="history">
          ${iconButton("undo", "Undo")}
          <button class="dim" aria-label="Undo history">${icon("chevron")}</button>
          ${iconButton("redo", "Repeat")}
        </div>
        ${iconButton("customize", "Customize toolbar")}
      </div>
      <h1>${icon("xls")}<span>MAT120 Wk6 discussion tableA2.xls  -  Compatibility Mode</span><span class="dim">${icon("chevron")}</span></h1>
      <div class="side">${iconButton("search", "Search sheet")}${iconButton("user", "Account")}</div>
    `;
  }
}

class RibbonTabs extends BaseElement {
  render() {
    const tabs = ["Home", "Insert", "Draw", "Page Layout", "Formulas", "Data", "Review", "View", "Developer"];
    return `
      <style>
        ${CONTROLS}
        :host {
          display: flex;
          justify-content: space-between;
          align-items: center;
          height: 31px;
          padding: 0 9px 2px 10px;
          background: var(--panel);
          font-size: 13px;
          font-weight: 600;
          color: #cfcfcf;
        }
        .bar, .tabs { display: flex; gap: 24px; }
        .bar { gap: 19px; }
        .tabs button { height: 24px; border-bottom: 3px solid transparent; border-top: 3px solid transparent; }
        .tabs button[aria-selected="true"] { font-weight: 700; border-bottom-color: #e2e2e2; color: #e2e2e2; }
        .tell { gap: 8px; }
        .actions { display: flex; gap: 10px; font-size: 12px; }
        .actions button { gap: 6px; height: 24px; padding: 0 6px 0 9px; border-radius: 3px; background: #606060; color: #ececec; }
      </style>
      <div class="bar">
        <div class="tabs" role="tablist">
          ${tabs.map((t, i) => `<button role="tab" aria-selected="${i === 0}">${t}</button>`).join("")}
        </div>
        <button class="tell">${icon("bulb")}Tell me</button>
      </div>
      <div class="actions">
        <button>${icon("share")}Share</button>
        <button>${icon("comment")}Comments</button>
      </div>
    `;
  }
}

class RibbonGroup extends BaseElement {
  render() {
    return `
      <style>
        :host {
          display: flex;
          flex-direction: column;
          flex: none;
          box-sizing: border-box;
          padding-top: 1px;
          background: linear-gradient(#505050, #505050) right 1px / 1px 79px no-repeat;
        }
        :host([last]) { background: none; }
        .body { height: 70px; }
        .label { text-align: center; font-size: 10px; line-height: 16px; color: var(--fg-soft); font-weight: 500; }
      </style>
      <div class="body"><slot></slot></div>
      <div class="label">${this.getAttribute("label")}</div>
    `;
  }
}

class RibbonPanel extends BaseElement {
  render() {
    const command = (name, text) => `<button class="cmd">${icon(name)}${text}${icon("chevron")}</button>`;
    const big = (name, text, chev = true) => `
      <button class="big"><span class="art">${icon(name)}${chev ? icon("chevron") : ""}</span><span>${text}</span></button>`;
    return `
      <style>
        ${CONTROLS}
        :host {
          display: flex;
          height: 88px;
          border-bottom: 1px solid #0c0c0c;
          background: var(--panel);
          font-size: 11px;
          font-weight: 500;
          overflow: hidden;
        }
        .row { display: flex; align-items: center; height: 22px; }
        .row > button { width: 24px; height: 20px; border-radius: 3px; }
        .row > button.chev { width: 12px; }
        .row > button.on { background: #484848; }
        .rule { width: 14px; display: flex; justify-content: center; }
        .rule::before { content: ""; width: 1px; height: 18px; background: #505050; }
        .clip { display: flex; }
        .big { flex-direction: column; justify-content: flex-start; line-height: 12px; }
        .art { display: flex; align-items: center; gap: 5px; height: 38px; margin-bottom: 1px; }
        .cmd { display: flex; justify-content: flex-start; gap: 6px; height: 22px; white-space: nowrap; }
        .fields { display: flex; align-items: center; gap: 3px; height: 34px; margin-bottom: 4px; }
        .fields button { width: 26px; }
        .pick { display: grid; align-items: center; height: 24px; }
        .pick select, .pick ui-icon { grid-area: 1 / 1; }
        .pick ui-icon { justify-self: end; margin-right: 4px; pointer-events: none; }
        select {
          appearance: none;
          width: 100%;
          height: 24px;
          padding: 0 5px;
          border: 1px solid #454545;
          border-radius: 3px;
          background: #3a3a3a;
          font-size: 12px;
        }
        .font { padding-left: 9px; }
        .tall > button { width: 26px; }
        .glyph { font-size: 14px; font-weight: 400; color: #cfcfcf; }
        .glyph b { font-weight: 600; }
        .sign { font-size: 18px; font-weight: 300; color: #d0d0d0; }
        .dim { color: #828282; }
        .indent { padding-left: 13px; }
        .edit { display: flex; padding-left: 8px; gap: 4px; }
      </style>

      <ribbon-group label="Clipboard" style="width:104px">
        <div class="clip" style="padding-left:14px">
          ${big("paste", "Paste")}
          <div style="padding-left:3px">
            <div class="row">${iconButton("cut", "Cut")}</div>
            <div class="row">${iconButton("copy", "Copy")}${chevronButton("Copy")}</div>
            <div class="row">${iconButton("brush", "Format painter")}</div>
          </div>
        </div>
      </ribbon-group>

      <ribbon-group label="Font" style="width:270px">
        <div class="font">
          <div class="fields">
            <label class="pick" style="width:141px"><select aria-label="Font name"><option>Calibri (Body)</option></select>${icon("chevron")}</label>
            <label class="pick" style="width:54px"><select aria-label="Font size"><option>10</option></select>${icon("chevron")}</label>
            ${iconButton("grow", "Increase font size")}${iconButton("shrink", "Decrease font size")}
          </div>
          <div class="row tall">
            <button class="glyph" aria-label="Bold"><b>B</b></button>
            <button class="glyph" aria-label="Italic"><i style="font-family:'Liberation Serif',serif">I</i></button>
            <button class="glyph" aria-label="Underline"><u>U</u></button>${chevronButton("Underline")}
            <span class="rule"></span>
            ${iconButton("borders", "Borders")}${chevronButton("Borders")}
            <span class="rule"></span>
            ${iconButton("fill", "Fill color")}${chevronButton("Fill color")}
            ${iconButton("fontColor", "Font color")}${chevronButton("Font color")}
          </div>
        </div>
      </ribbon-group>

      <ribbon-group label="Alignment" style="width:127px">
        <div style="padding-left:9px">
          <div class="row">${iconButton("alignTop", "Top align")}${iconButton("alignMid", "Middle align")}${iconButton("alignBot", "Bottom align", "on")}${iconButton("wrap", "Wrap text", "on")}${chevronButton("Wrap text")}</div>
          <div class="row">${iconButton("left", "Align left", "on")}${iconButton("center", "Center")}${iconButton("right", "Align right")}${iconButton("merge", "Merge and center", "on")}${chevronButton("Merge")}</div>
          <div class="row">${iconButton("outdent", "Decrease indent")}${iconButton("indent", "Increase indent")}<span class="rule"></span>${iconButton("orient", "Orientation")}${chevronButton("Orientation")}</div>
        </div>
      </ribbon-group>

      <ribbon-group label="Number" style="width:176px">
        <div style="padding:0 10px">
          <div class="fields">
            <label class="pick" style="width:100%"><select aria-label="Number format"><option>General</option></select>${icon("chevron")}</label>
          </div>
          <div class="row tall">
            <button class="sign" aria-label="Currency">$</button>${chevronButton("Currency")}
            <button class="sign" aria-label="Percent">%</button>
            ${iconButton("comma", "Comma style")}
            <span class="rule"></span>
            ${iconButton("decUp", "Increase decimal")}${iconButton("decDown", "Decrease decimal")}
          </div>
        </div>
      </ribbon-group>

      <ribbon-group label="Styles" style="width:177px">
        <div class="indent">
          ${command("condFormat", "Conditional Formatting")}
          ${command("tableFormat", "Format as Table")}
          ${command("cellStyle", "Cell Styles")}
        </div>
      </ribbon-group>

      <ribbon-group label="Cells" style="width:97px">
        <div class="indent">
          ${command("insertCells", "Insert")}
          ${command("deleteCells", "Delete")}
          ${command("formatCells", "Format")}
        </div>
      </ribbon-group>

      <ribbon-group label="Editing" style="width:155px">
        <div class="edit">
          <div>
            <div class="row">${iconButton("sum", "AutoSum")}${chevronButton("AutoSum")}</div>
            <div class="row">${iconButton("fillDown", "Fill")}${chevronButton("Fill")}</div>
            <div class="row">${iconButton("eraser", "Clear")}${chevronButton("Clear")}</div>
          </div>
          ${big("sort", "Sort &amp;<br>Filter")}
          <span></span>
          ${big("find", "Find &amp;<br>Select")}
        </div>
      </ribbon-group>

      <ribbon-group label="Ideas" style="width:57px">
        <div class="dim" style="text-align:center">${big("bolt", "Ideas", false)}</div>
      </ribbon-group>

      <ribbon-group label="Sensitivity" style="width:78px" last>
        <div class="dim" style="text-align:center">${big("sensitivity", "Sensitivity")}</div>
      </ribbon-group>
    `;
  }
}

class FormulaBar extends BaseElement {
  render() {
    const text = "Table with row headings in column A and column headings in rows 5 and 6, 62 and 63, 84 and 85, 122 and 123, 144 and 145, 177 and 178, 199 and 200, 221 and 222, 259 and 260, 281 and 282,";
    return `
      <style>
        ${CONTROLS}
        :host {
          display: flex;
          align-items: center;
          height: 27px;
          border-bottom: 2px solid #b4b4b4;
          background: #272727;
        }
        .name { width: 54px; padding: 0 0 0 9px; border: 0; background: none; font-size: 13px; color: #b8b8b8; }
        .name-box { display: flex; align-items: center; justify-content: space-between; width: 80px; padding-right: 4px; border-right: 1px solid #1a1a1a; height: 27px; }
        .actions { display: flex; align-items: center; gap: 18px; padding: 0 7px 0 13px; }
        .fx { font: italic 18px "Liberation Serif", serif; color: #a8a8a8; }
        .formula {
          flex: 1;
          min-width: 0;
          box-sizing: border-box;
          height: 20px;
          padding: 0 8px;
          border: 0;
          background: #3a3a3a;
          color: #fff;
          font-family: var(--sheet);
          font-size: 12px;
          font-weight: 700;
        }
        .open { width: 14px; }
      </style>
      <div class="name-box"><input class="name" aria-label="Name box" value="A1">${iconButton("stepper", "Name box list")}</div>
      <div class="actions">
        ${iconButton("clear", "Cancel")}
        ${iconButton("check", "Enter")}
        <button class="fx" aria-label="Insert function">fx</button>
      </div>
      <input class="formula" aria-label="Formula" value="${text}">
      ${iconButton("down", "Expand formula bar", "open")}
    `;
  }
}

// year, note marker, then columns B to P
const ROWS_ABOVE = [
  ["1969", "", "63,401 100.0 13.4 10.1 9.6 16.4 24.3 13.9 8.9 2.1 1.3 50,940 188 57,954 182"],
  ["1968", "", "62,214 100.0 13.7 10.2 10.6 16.7 24.6 13.5 7.8 1.7 1.0 49,114 178 55,565 178"],
  ["1967", "22", "60,813 100.0 15.0 10.3 11.1 17.6 24.2 12.0 7.0 1.6 1.1 47,085 171 52,662 171"]
];
const ROWS_WHITE_ALONE = [
  ["2018", "", "100,528 100.0 8.7 8.4 8.5 11.9 17.5 13.0 15.7 7.3 9.0 66,943 393 93,948 628"],
  ["2017", "1", "100,113 100.0 8.8 8.9 8.8 12.0 16.7 12.8 15.4 7.5 9.1 66,413 524 93,750 658"],
  ["2017", "", "100,065 100.0 8.9 9.1 8.8 11.9 16.6 12.9 15.5 7.7 8.6 66,864 426 91,817 617"],
  ["2016", "", "99,400 100.0 9.0 8.7 9.2 12.5 16.9 12.8 15.5 7.4 8.1 64,729 349 90,351 559"],
  ["2015", "", "99,313 100.0 9.1 9.6 9.7 12.2 16.6 12.7 15.8 7.1 7.3 63,710 404 87,152 498"],
  ["2014", "", "98,679 100.0 10.2 10.0 9.4 12.7 17.2 12.2 14.7 6.6 7.0 60,376 377 83,760 555"],
  ["2013", "2", "98,807 100.0 10.1 10.4 9.3 12.2 17.1 13.0 14.2 6.9 6.9 61,268 558 84,028 818"],
  ["2013", "3", "97,774 100.0 9.9 10.3 9.6 13.0 17.2 13.2 14.0 6.6 6.2 59,661 459 81,884 587"],
  ["2012", "", "97,705 100.0 9.8 10.4 10.0 13.1 17.3 12.9 14.1 6.4 6.0 58,846 421 81,538 508"],
  ["2011", "", "96,964 100.0 10.1 9.9 10.1 13.2 17.7 12.2 14.3 6.4 6.0 58,423 252 81,470 472"],
  ["2010", "4", "96,306 100.0 9.6 10.6 9.9 12.7 17.2 12.8 14.6 6.5 6.1 59,682 292 81,268 467"],
  ["2009", "5", "95,489 100.0 9.0 9.9 9.3 13.6 17.6 13.0 14.9 6.5 6.1 60,845 181 82,764 319"],
  ["2008", "", "95,297 100.0 9.1 9.9 9.2 13.3 17.4 13.1 15.4 6.5 6.1 61,160 178 83,232 320"],
  ["2007", "", "95,112 100.0 8.6 9.8 8.9 12.9 17.5 13.1 15.8 6.8 6.6 63,270 187 85,385 325"],
  ["2006", "", "94,705 100.0 8.8 9.3 9.1 13.3 17.8 13.0 15.4 6.8 6.6 63,264 184 86,279 360"],
  ["2005", "", "93,588 100.0 8.8 9.5 9.6 12.7 18.0 13.4 15.2 6.6 6.4 62,584 273 85,022 352"],
  ["2004", "6", "92,880 100.0 9.0 9.6 10.0 12.5 17.7 13.2 15.4 6.4 6.2 62,177 244 83,833 345"],
  ["2003", "", "91,962 100.0 9.0 9.7 9.4 12.9 17.3 13.1 15.8 6.5 6.3 62,451 245 84,289 338"],
  ["2002", "", "91,645 100.0 8.7 9.5 9.5 12.7 17.7 13.2 16.1 6.4 6.0 63,107 256 84,214 343"]
];
const BRACKETS = ["Total", "Under<br>$15,000", "$15,000<br>to<br>$24,999", "$25,000<br>to<br>$34,999", "$35,000<br>to<br>$49,999", "$50,000<br>to<br>$74,999", "$75,000<br>to<br>$99,999", "$100,000<br>to<br>$149,999", "$150,000<br>to<br>$199,999", "$200,000<br>and over", "Estimate", "Standard<br>error", "Estimate", "Standard<br>error"];
const BLANK = `<td class="blank" colspan="5"></td>`;

class SheetGrid extends BaseElement {
  connectedCallback() {
    super.connectedCallback();
    // row 58 sits partly under the column letters; wait until the bars around the grid have their height
    queueMicrotask(() => { this.scrollTop = 7; });
  }

  dataRow([year, note, values], number) {
    const sup = note ? ` <sup>${note}</sup>` : "";
    return `<tr><th scope="row" class="num">${number}</th><td class="year">${year}${sup}</td>${values.split(" ").map((v) => `<td>${v}</td>`).join("")}${BLANK}</tr>`;
  }

  titleRow(text, note, number) {
    return `<tr class="section"><th scope="row" class="num">${number}</th><td class="title" colspan="16">${text} <sup>${note}</sup></td>${BLANK}</tr>`;
  }

  headRows(number, cls, mean) {
    return `
      <tr class="${cls}">
        <th scope="row" class="num">${number}</th>
        <th class="fill" rowspan="2">Race and Hispanic<br>origin of householder<br>and year</th>
        <th class="fill" rowspan="2">Number<br>(thousands)</th>
        <th class="fill" colspan="10">Percent distribution</th>
        <th class="fill" colspan="2">Median income<br>(dollars)</th>
        <th class="fill" colspan="2">${mean}</th>
        ${BLANK}
      </tr>
      <tr class="brackets"><th scope="row" class="num">${number + 1}</th>${BRACKETS.map((b) => `<th class="fill">${b}</th>`).join("")}${BLANK}</tr>
    `;
  }

  render() {
    const letters = "ABCDEFGHIJKLMNOPQRST".split("");
    const widths = [22, 109, 69, 62, ...Array(9).fill(59), ...Array(4).fill(64), ...Array(4).fill(55)];
    return `
      <style>
        :host {
          display: block;
          flex: 1;
          min-height: 0;
          overflow: auto;
          scrollbar-width: none;
          background: #fff;
          color: #000;
          font-family: var(--sheet);
          font-size: 9px;
        }
        table { width: 100%; table-layout: fixed; border-spacing: 0; }
        th, td { box-sizing: border-box; padding: 0; line-height: 14px; white-space: nowrap; }
        thead th {
          position: sticky;
          top: 0;
          height: 22px;
          border-right: 1px solid #575757;
          border-bottom: 2px solid #107c41;
          background: #575757;
          color: #fff;
          font-size: 11px;
        }
        thead th.idle { background: #151515; border-color: #555 #555 #e2e2e2; border-bottom-width: 2px; }
        thead th.corner {
          border-bottom-color: #4c4c4c;
          border-right-color: #999;
          background: linear-gradient(135deg, #1d1d1d 50%, #6c6c6c 50%) 3px 3px / 15px 15px no-repeat #1d1d1d;
        }
        td { height: 15px; padding-right: 3px; border: solid #a3bfdd; border-width: 0 1px 1px 0; text-align: right; }
        .num {
          border: solid #555;
          border-width: 0 0 1px;
          background: #161616;
          color: #fff;
          font-size: 11px;
          vertical-align: bottom;
        }
        .year, .title { text-align: left; padding-left: 2px; }
        .section .num { line-height: 13px; }
        .section td { height: 14px; }
        .title { border-width: 0; font-weight: 700; font-size: 10px; line-height: 12px; vertical-align: top; }
        .blank, .section .blank { height: auto; border: 0; }
        sup { font-size: 7px; line-height: 0; font-weight: 700; }
        .fill { border: solid #a6bdd4; border-width: 0 1px 1px 0; background: #90c8ff; font-size: 10px; line-height: 15px; }
        .top { height: 32px; }
        .next { height: 30px; }
        .brackets { height: 45px; }
        .split { display: flex; justify-content: space-between; padding: 0 2px; }
      </style>
      <table>
        <colgroup>${widths.map((w) => `<col style="width:${w}px">`).join("")}<col></colgroup>
        <thead>
          <tr>
            <th class="corner"></th>
            ${letters.map((l, i) => `<th scope="col" class="${i > 15 ? "idle" : ""}">${l}</th>`).join("")}
            <th class="idle"></th>
          </tr>
        </thead>
        <tbody>
          ${ROWS_ABOVE.map((r, i) => this.dataRow(r, 58 + i)).join("")}
          ${this.titleRow("WHITE ALONE", "23", 61)}
          ${this.headRows(62, "top", `<div class="split"><span>Mean income</span><span>(dollars)</span></div>`)}
          ${ROWS_WHITE_ALONE.map((r, i) => this.dataRow(r, 64 + i)).join("")}
          ${this.titleRow("WHITE", "24", 83)}
          ${this.headRows(84, "next", "Mean income<br>(dollars)")}
        </tbody>
      </table>
    `;
  }
}

class SheetTabs extends BaseElement {
  render() {
    return `
      <style>
        ${CONTROLS}
        :host { display: flex; align-items: flex-start; height: 26px; border-bottom: 1px solid #0c0c0c; background: #323232; }
        .arrows { display: flex; gap: 15px; width: 46px; height: 26px; padding-left: 14px; }
        .tab { width: 78px; height: 22px; border-radius: 0 0 2px 2px; background: #fff; color: #158a4e; font-size: 12px; font-weight: 700; }
        .add { width: 38px; height: 24px; border-right: 1px solid #5a5a5a; box-sizing: border-box; }
      </style>
      <div class="arrows">${iconButton("prev", "Previous sheet")}${iconButton("next", "Next sheet")}</div>
      <button class="tab">tableA2</button>
      ${iconButton("plus", "Add sheet", "add")}
    `;
  }
}

class StatusBar extends BaseElement {
  render() {
    return `
      <style>
        ${CONTROLS}
        :host {
          display: flex;
          justify-content: space-between;
          align-items: center;
          height: 22px;
          padding: 0 23px;
          border-bottom: 1px solid #111;
          border-radius: 0 0 5px 5px;
          background: linear-gradient(#494949, #3c3c3c);
          font-size: 12px;
        }
        .right { display: flex; align-items: center; }
        .view { width: 36px; height: 22px; }
        .view.on { background: #5a5a5a; }
        .zoom { display: flex; align-items: center; gap: 3px; padding: 0 15px 0 13px; }
        input { appearance: none; width: 98px; height: 4px; border-radius: 2px; background: #6a6a6a; }
        input::-webkit-slider-thumb { appearance: none; width: 11px; height: 11px; border-radius: 50%; background: #c6c6c6; }
        .zoom button:last-child { margin-left: 4px; }
      </style>
      ${iconButton("macro", "Record macro")}
      <div class="right">
        ${iconButton("viewNormal", "Normal view", "view on")}
        ${iconButton("viewPage", "Page layout view", "view")}
        ${iconButton("viewBreak", "Page break preview", "view")}
        <div class="zoom">
          ${iconButton("minusBold", "Zoom out")}
          <input type="range" aria-label="Zoom" min="0" max="100" value="50">
          ${iconButton("plusBold", "Zoom in")}
        </div>
        <span>100%</span>
      </div>
    `;
  }
}

class DockItem extends BaseElement {
  render() {
    const badge = this.getAttribute("badge");
    return `
      <style>
        ${CONTROLS}
        :host { display: flex; justify-content: center; flex: 1; min-width: 0; position: relative; padding-top: 5px; }
        button { height: 32px; }
        svg { display: block; overflow: visible; font-family: var(--ui); }
        .badge {
          position: absolute;
          top: 3px;
          left: 50%;
          margin-left: 4px;
          min-width: 11px;
          padding: 0 1px;
          border-radius: 7px;
          background: #f3181c;
          color: #fff;
          font-size: 8px;
          line-height: 13px;
          text-align: center;
        }
        .dot { position: absolute; bottom: 2px; left: 50%; margin-left: -2px; width: 4px; height: 4px; border-radius: 50%; background: #f3b88c; }
      </style>
      <button aria-label="${this.getAttribute("art")}"><svg width="32" height="32" viewBox="0 0 32 32" aria-hidden="true">${DOCK_ART[this.getAttribute("art")]}</svg></button>
      ${badge ? `<span class="badge">${badge}</span>` : ""}
      ${this.hasAttribute("running") ? `<span class="dot"></span>` : ""}
    `;
  }
}

class AppDock extends BaseElement {
  render() {
    const item = (art, badge = "", running = false) => `<dock-item art="${art}" badge="${badge}"${running ? " running" : ""}></dock-item>`;
    return `
      <style>
        :host {
          display: flex;
          box-sizing: border-box;
          height: 47px;
          margin: 0 29px;
          padding: 0 2px;
          border: 1px solid rgba(255, 255, 255, 0.25);
          border-bottom: 0;
          border-radius: 5px 5px 0 0;
          background: linear-gradient(90deg, #4d2e25, #6b3c26 22%, #73390f 36%, #84400b 60%, #914610 76%, #5c3712 90%, #4f3218);
        }
        hr { flex: none; width: 1px; height: 26px; margin: 10px 8px; border: 0; background: rgba(255, 190, 130, 0.5); }
      </style>
      ${item("finder", "", true)}${item("siri")}${item("rocket")}${item("safari")}${item("mail", "946", true)}${item("contacts")}
      ${item("notes")}${item("reminders", "4")}${item("maps")}${item("messages")}${item("photos")}${item("calendar")}
      ${item("facetime", "39")}${item("numbers")}${item("keynote")}${item("pages")}${item("news")}${item("music", "", true)}
      ${item("books")}${item("appstore", "6")}${item("settings", "1")}${item("brain")}${item("firefox", "", true)}${item("seal")}
      <hr>
      ${item("word", "", true)}${item("cc")}${item("updater", "6", true)}${item("excel", "", true)}
      <hr>
      ${item("miniWindow")}${item("miniDoc")}${item("trash")}
    `;
  }
}

class AppWindow extends BaseElement {
  render() {
    return `
      <style>
        :host {
          display: flex;
          flex-direction: column;
          flex: 1;
          min-height: 0;
          border: solid #555;
          border-width: 0 1px;
          border-radius: 5px;
          overflow: hidden;
        }
      </style>
      <title-bar></title-bar>
      <ribbon-tabs></ribbon-tabs>
      <ribbon-panel></ribbon-panel>
      <formula-bar></formula-bar>
      <sheet-grid></sheet-grid>
      <sheet-tabs></sheet-tabs>
      <status-bar></status-bar>
    `;
  }
}

class DesktopShell extends BaseElement {
  render() {
    return `
      <style>:host { display: flex; flex-direction: column; height: 100vh; }</style>
      <menu-bar></menu-bar>
      <app-window></app-window>
      <app-dock></app-dock>
    `;
  }
}

customElements.define("ui-icon", UiIcon);
customElements.define("menu-bar", MenuBar);
customElements.define("title-bar", TitleBar);
customElements.define("ribbon-tabs", RibbonTabs);
customElements.define("ribbon-group", RibbonGroup);
customElements.define("ribbon-panel", RibbonPanel);
customElements.define("formula-bar", FormulaBar);
customElements.define("sheet-grid", SheetGrid);
customElements.define("sheet-tabs", SheetTabs);
customElements.define("status-bar", StatusBar);
customElements.define("dock-item", DockItem);
customElements.define("app-dock", AppDock);
customElements.define("app-window", AppWindow);
customElements.define("desktop-shell", DesktopShell);
</script>
</body>
</html>
